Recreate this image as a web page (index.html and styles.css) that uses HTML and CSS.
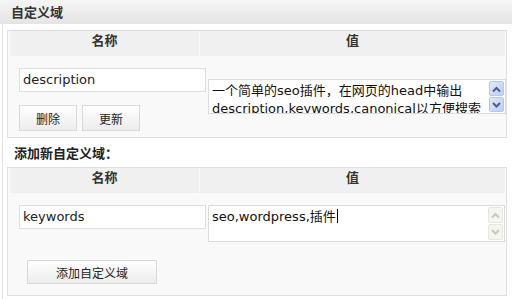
FILE: index.html
```html
<!DOCTYPE html>
<html lang="zh">
<head>
<meta charset="utf-8">
<title>自定义域</title>
<link rel="stylesheet" href="styles.css">
</head>
<body>
<div class="postbox">
  <h3 class="hndle">自定义域</h3>
  <div class="inside">
    <div class="tbl">
      <div class="thead">
        <div class="th th-name">名称</div>
        <div class="th th-val">值</div>
      </div>
      <div class="row row-list">
        <div class="left">
          <div class="txt">description</div>
          <div class="btns">
            <span class="btn btn-small">删除</span>
            <span class="btn btn-small">更新</span>
          </div>
        </div>
        <div class="ta ta-list">
          <div class="ta-text">一个简单的seo插件，在网页的head中输出<br>description,keywords,canonical以方便搜索</div>
          <div class="sb sb-active">
            <span class="arr"><svg width="11" height="8" viewBox="0 0 11 8"><polyline points="2,6.5 5.5,3 9,6.5" fill="none" stroke="#4d6185" stroke-width="2"/></svg></span>
            <span class="arr"><svg width="11" height="8" viewBox="0 0 11 8"><polyline points="2,2 5.5,5.5 9,2" fill="none" stroke="#4d6185" stroke-width="2"/></svg></span>
          </div>
        </div>
      </div>
    </div>

    <p class="add-title">添加新自定义域：</p>

    <div class="tbl">
      <div class="thead">
        <div class="th th-name">名称</div>
        <div class="th th-val">值</div>
      </div>
      <div class="row row-new">
        <div class="left">
          <div class="txt">keywords</div>
        </div>
        <div class="ta ta-new">
          <div class="ta-text">seo,wordpress,插件<span class="caret"></span></div>
          <div class="sb sb-disabled">
            <span class="arr"><svg width="11" height="8" viewBox="0 0 11 8"><polyline points="2,6.5 5.5,3 9,6.5" fill="none" stroke="#c9c9c2" stroke-width="2"/></svg></span>
            <span class="arr"><svg width="11" height="8" viewBox="0 0 11 8"><polyline points="2,2 5.5,5.5 9,2" fill="none" stroke="#c9c9c2" stroke-width="2"/></svg></span>
          </div>
        </div>
      </div>
      <div class="submit-row">
        <span class="btn btn-add">添加自定义域</span>
      </div>
    </div>
  </div>
</div>
</body>
</html>
```
FILE: styles.css
```css
* { box-sizing: border-box; }

html, body {
  margin: 0;
  padding: 0;
  background: #ffffff;
}

body {
  font-family: "DejaVu Sans", "Noto Sans CJK SC", sans-serif;
  font-size: 13px;
  color: #222222;
  width: 512px;
  height: 299px;
  overflow: hidden;
}

.postbox {
  display: flex;
  flex-direction: column;
}

.hndle {
  margin: 0;
  height: 24px;
  padding: 3px 0 0 11px;
  font-family: "Noto Sans CJK SC", sans-serif;
  font-size: 13px;
  line-height: 18px;
  font-weight: bold;
  color: #333333;
  background: linear-gradient(#f5f5f5, #e4e4e4);
}

.inside {
  margin-left: 2px;
  border-left: 1px solid #e2e2e2;
  padding: 6px 5px 4px 4px;
}

.tbl {
  border: 1px solid #dfdfdf;
  background: #f9f9f9;
}

.thead {
  display: flex;
  gap: 1px;
  padding: 0 1px 0 2px;
}

.th {
  height: 25px;
  padding-top: 0;
  line-height: 18px;
  text-align: center;
  font-family: "Noto Sans CJK SC", sans-serif;
  font-weight: bold;
  font-size: 13px;
  color: #333333;
  background: #f0f0f0;
}

.th-name { width: 189px; }
.th-val { flex: 1; }

.row {
  display: flex;
  align-items: flex-start;
  padding: 12px 0 0 11px;
}

.row-list { padding-bottom: 6px; }

.left {
  width: 187px;
  display: flex;
  flex-direction: column;
}

.txt {
  height: 24px;
  border: 1px solid #dfdfdf;
  background: #ffffff;
  padding: 0 3px;
  line-height: 21px;
  font-size: 13px;
  color: #222222;
}

.btns {
  display: flex;
  gap: 5px;
  margin-top: 13px;
}

.btn {
  display: flex;
  align-items: center;
  justify-content: center;
  border: 1px solid #d9d9d9;
  background: linear-gradient(#ffffff, #ececec);
  font-family: "Noto Sans CJK SC", sans-serif;
  font-size: 12px;
  color: #222222;
}

.btn-small {
  width: 58px;
  height: 26px;
}

.btn-add {
  width: 130px;
  height: 24px;
}

.ta {
  display: flex;
  margin-left: 2px;
  border: 1px solid #dcdcdc;
  background: #ffffff;
  width: 298px;
}

.ta-list {
  margin-top: 11px;
  height: 35px;
}

.ta-new {
  width: 297px;
  height: 37px;
}

.ta-text {
  flex: 1;
  overflow: hidden;
  padding: 2px 3px;
  line-height: 18px;
  white-space: nowrap;
  font-size: 13px;
  color: #111111;
}

.caret {
  display: inline-block;
  width: 1px;
  height: 14px;
  margin-left: 1px;
  vertical-align: -2px;
  background: #000000;
}

.sb {
  width: 16px;
  display: flex;
  flex-direction: column;
  gap: 1px;
  padding: 1px 1px 1px 0;
}

.arr {
  flex: 1;
  display: flex;
  align-items: center;
  justify-content: center;
}

.sb-active .arr {
  border: 1px solid #b3c6f2;
  background: linear-gradient(135deg, #dfe8fd, #bccdf6);
  border-radius: 2px;
}

.sb-disabled .arr {
  border: 1px solid #e6e6df;
  background: #f5f5f1;
  border-radius: 2px;
}

.add-title {
  margin: 6px 0 5px 7px;
  line-height: 18px;
  font-family: "Noto Sans CJK SC", sans-serif;
  font-weight: bold;
  font-size: 13px;
  color: #222222;
}

.submit-row {
  display: flex;
  padding: 18px 0 11px 19px;
}
```
